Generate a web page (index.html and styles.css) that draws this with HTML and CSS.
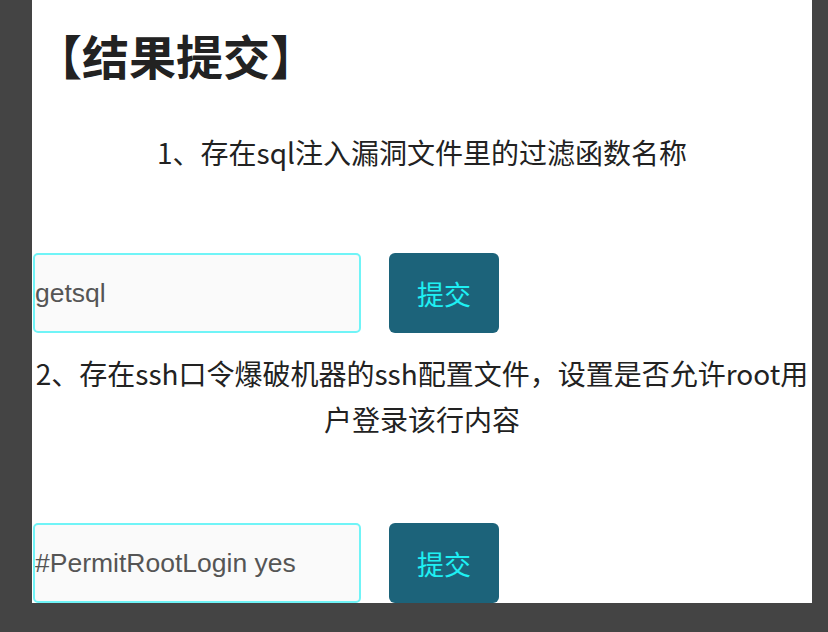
FILE: index.html
```html
<!DOCTYPE html>
<html lang="zh-CN">
<head>
<meta charset="utf-8">
<title>结果提交</title>
<link rel="stylesheet" href="styles.css">
</head>
<body>
<div class="panel">
  <h1 class="title">【结果提交】</h1>
  <p class="q q1">1、存在sql注入漏洞文件里的过滤函数名称</p>
  <div class="row row1">
    <input class="answer" type="text" value="getsql">
    <button class="submit" type="button">提交</button>
  </div>
  <p class="q q2">2、存在ssh口令爆破机器的ssh配置文件，设置是否允许root用户登录该行内容</p>
  <div class="row row2">
    <input class="answer" type="text" value="#PermitRootLogin yes">
    <button class="submit" type="button">提交</button>
  </div>
</div>
</body>
</html>
```

FILE: styles.css
```css
html, body {
  margin: 0;
  padding: 0;
  background: #444444;
  height: 100%;
  overflow: hidden;
}
.panel {
  margin-left: 32px;
  width: 780px;
  height: 603px;
  background: #ffffff;
  overflow: hidden;
  font-family: "Noto Sans CJK SC", "Microsoft YaHei", sans-serif;
  color: #222222;
}
.title {
  margin: 0;
  padding: 26px 0 0 3px;
  font-size: 47px;
  line-height: 58px;
  font-weight: 700;
  color: #222222;
}
.q {
  margin: 0;
  font-size: 28px;
  line-height: 46px;
  text-align: center;
}
.q1 { margin-top: 45px; }
.q2 { margin-top: 17px; }
.row {
  display: flex;
  align-items: flex-start;
  gap: 28px;
  padding-left: 1px;
}
.row1 { margin-top: 78px; }
.row2 { margin-top: 81px; }
.answer {
  box-sizing: border-box;
  width: 328px;
  height: 80px;
  margin: 0;
  padding: 0;
  border: 2px solid #70f4f7;
  border-radius: 5px;
  background: #fafafa;
  font-family: "Liberation Sans", Arial, sans-serif;
  font-size: 26.5px;
  color: #555555;
  outline: none;
}
.submit {
  box-sizing: border-box;
  width: 110px;
  height: 80px;
  margin: 0;
  padding: 0;
  border: none;
  border-radius: 6px;
  background: #1c637a;
  color: #1ef0f3;
  font-family: "Noto Sans CJK SC", "Microsoft YaHei", sans-serif;
  font-size: 27px;
}
```
